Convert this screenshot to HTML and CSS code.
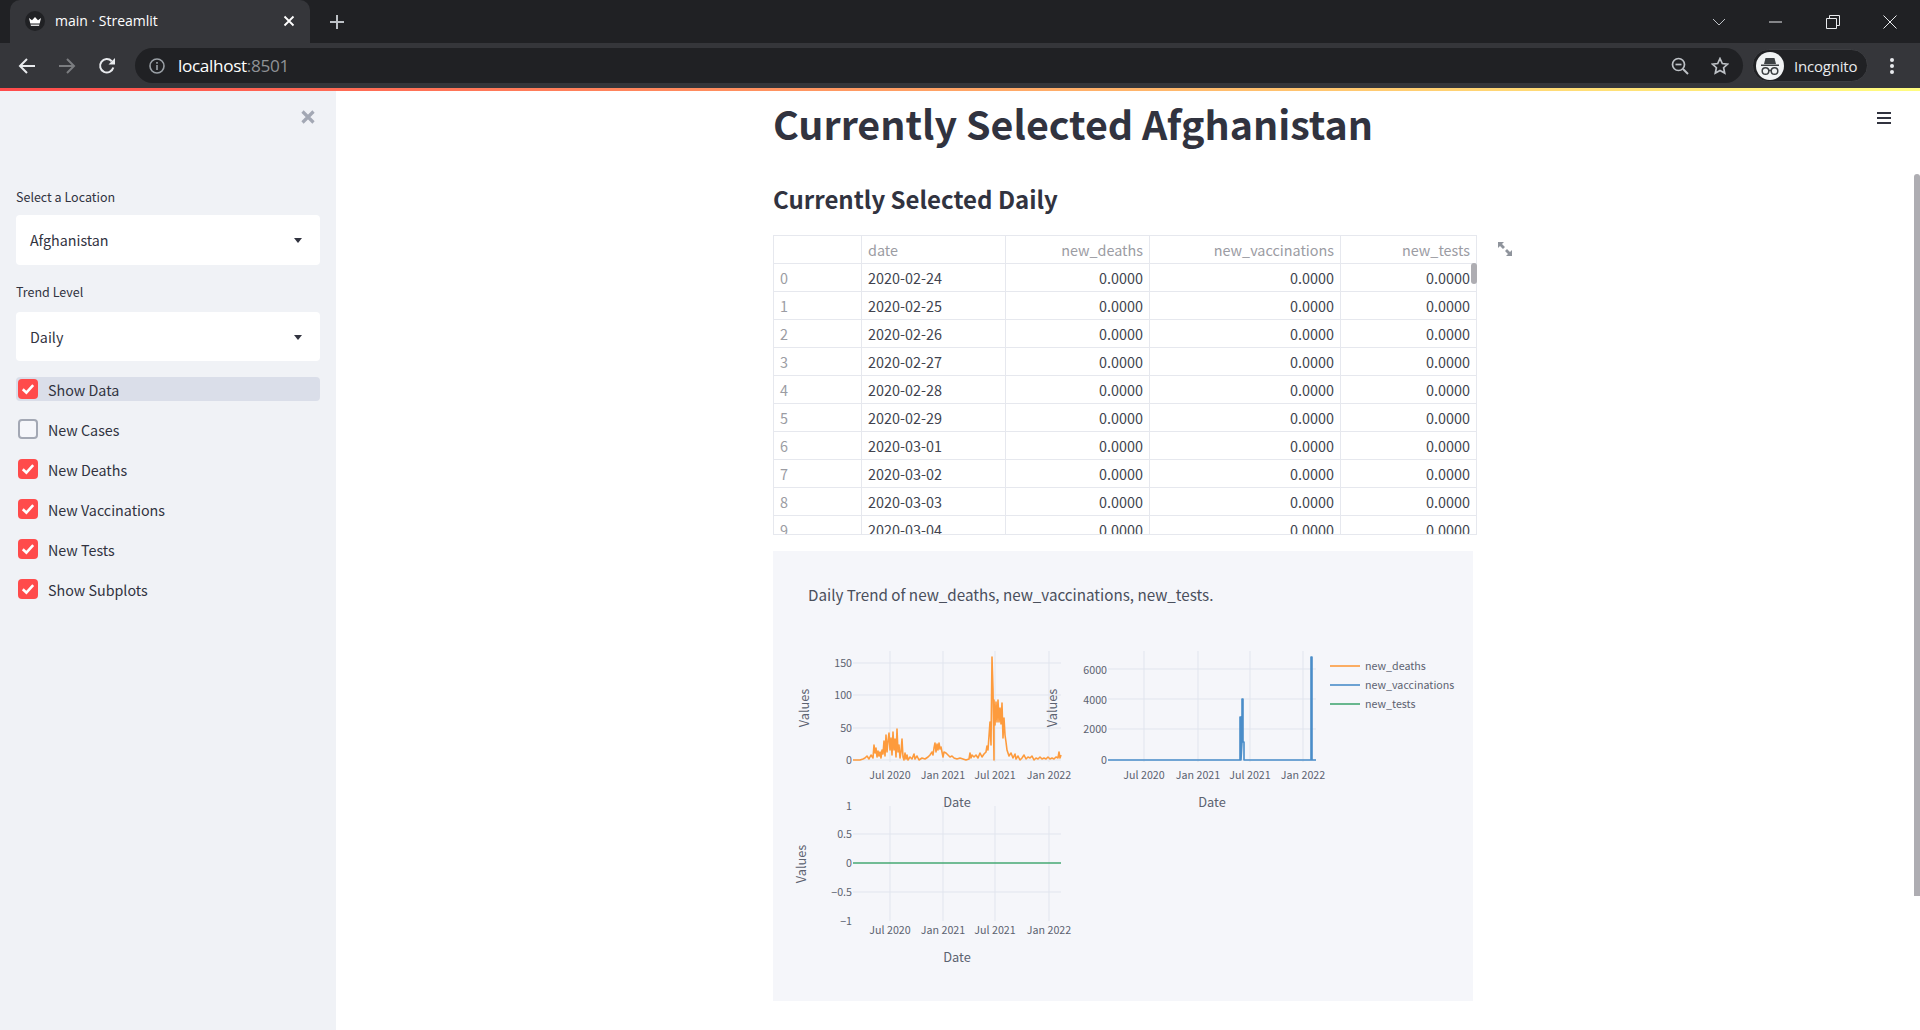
FILE: index.html
```html
<!DOCTYPE html>
<html>
<head>
    <meta charset="utf-8" />
    <title>main · Streamlit</title>
    <link rel="stylesheet" href="styles.css">
</head>
<body>

<header class="browser">
    <div class="tabstrip">
        <div class="tab">
            <svg class="favicon" width="20" height="20" viewBox="0 0 20 20">
                <circle cx="10" cy="10" r="10" fill="#202124"/>
                <path d="M4 7l3 2.2L10 6l3 3.2L16 7l-1.3 5.5H5.300z" fill="#fff"/>
                <path d="M5.500 13.500h9l-.5 1.500H6z" fill="#ddd"/>
            </svg>
            <span class="tab-title">main · Streamlit</span>
            <svg class="tab-close" width="12" height="12" viewBox="0 0 12 12"><path d="M1.500 1.500l9 9M10.500 1.500l-9 9" stroke="#fff" stroke-width="1.800"/></svg>
        </div>
        <svg class="new-tab" width="16" height="16" viewBox="0 0 16 16"><path d="M8 1v14M1 8h14" stroke="#bdc1c6" stroke-width="2"/></svg>
        <div class="window-controls">
            <svg width="14" height="8" viewBox="0 0 14 8"><path d="M1 1l6 6 6-6" fill="none" stroke="#bdc1c6"/></svg>
            <svg width="14" height="2" viewBox="0 0 14 2"><path d="M0 1h13" stroke="#e8eaed"/></svg>
            <svg width="14" height="14" viewBox="0 0 14 14"><path d="M.5 3.500h10v10H.5zM3.500 3.500v-3h10v10h-3" fill="none" stroke="#e8eaed"/></svg>
            <svg width="14" height="14" viewBox="0 0 14 14"><path d="M.5.500l13 13M13.500.500l-13 13" stroke="#e8eaed"/></svg>
        </div>
    </div>
    <div class="toolbar">
        <svg class="nav-icon" width="18" height="18" viewBox="0 0 18 18"><path d="M17 9H2M9 2L2 9l7 7" fill="none" stroke="#e8eaed" stroke-width="2"/></svg>
        <svg class="nav-icon" width="18" height="18" viewBox="0 0 18 18"><path d="M1 9h15M9 2l7 7-7 7" fill="none" stroke="#7b7d80" stroke-width="2"/></svg>
        <svg class="nav-icon" width="18" height="18" viewBox="0 0 18 18"><path d="M15.300 10.500A6.700 6.700 0 1 1 13.700 4.200" fill="none" stroke="#e8eaed" stroke-width="2"/><path d="M17 1v6.500h-6.500z" fill="#e8eaed"/></svg>
        <div class="omnibox">
            <svg width="16" height="16" viewBox="0 0 16 16"><circle cx="8" cy="8" r="7" fill="none" stroke="#9aa0a6" stroke-width="1.600"/><path d="M8 7v5M8 4v1.800" stroke="#9aa0a6" stroke-width="1.600"/></svg>
            <span class="url">localhost<span class="port">:8501</span></span>
            <svg class="omni-zoom" width="18" height="18" viewBox="0 0 18 18"><circle cx="7.500" cy="7.500" r="6" fill="none" stroke="#bdc1c6" stroke-width="1.700"/><path d="M12 12l5 5" stroke="#bdc1c6" stroke-width="2"/><path d="M4.500 7.500h6" stroke="#bdc1c6" stroke-width="1.700"/></svg>
            <svg width="18" height="18" viewBox="0 0 18 18"><path d="M9 1.500l2.300 5 5.300.6-4 3.600 1.100 5.400L9 13.400l-4.700 2.700 1.100-5.400-4-3.600 5.300-.6z" fill="none" stroke="#bdc1c6" stroke-width="1.700"/></svg>
        </div>
        <div class="profile">
            <svg width="28" height="28" viewBox="0 0 28 28">
                <circle cx="14" cy="14" r="14" fill="#f1f3f4"/>
                <path d="M9.500 6h9l1.500 6H8zM5 12.500h18V14H5z" fill="#3c4043"/>
                <circle cx="9.500" cy="19" r="3.300" fill="none" stroke="#3c4043" stroke-width="1.500"/>
                <circle cx="18.500" cy="19" r="3.300" fill="none" stroke="#3c4043" stroke-width="1.500"/>
                <path d="M12.800 18.500h2.400" stroke="#3c4043" stroke-width="1.500"/>
            </svg>
            <span>Incognito</span>
        </div>
        <svg class="menu-dots" width="6" height="18" viewBox="0 0 6 18"><circle cx="3" cy="3" r="2" fill="#e8eaed"/><circle cx="3" cy="9" r="2" fill="#e8eaed"/><circle cx="3" cy="15" r="2" fill="#e8eaed"/></svg>
    </div>
</header>
<div class="decoration"></div>

<div class="app">
    <aside class="sidebar">
        <svg class="sidebar-close" width="14" height="14" viewBox="0 0 14 14"><path d="M1.500 1.500l11 11M12.500 1.500l-11 11" stroke="#a3a8b4" stroke-width="3.200"/></svg>

        <label class="field-label">Select a Location</label>
        <div class="select select-location">Afghanistan<span class="caret"></span></div>

        <label class="field-label">Trend Level</label>
        <div class="select select-trend">Daily<span class="caret"></span></div>

        <div class="checks">
            <div class="check check-hover"><span class="box on"><svg width="14" height="12" viewBox="0 0 14 12"><path d="M1.800 6.200l3.600 3.400 6.800-7.400" fill="none" stroke="#fff" stroke-width="2.600"/></svg></span>Show Data</div>
            <div class="check"><span class="box"></span>New Cases</div>
            <div class="check"><span class="box on"><svg width="14" height="12" viewBox="0 0 14 12"><path d="M1.800 6.200l3.600 3.400 6.800-7.400" fill="none" stroke="#fff" stroke-width="2.600"/></svg></span>New Deaths</div>
            <div class="check"><span class="box on"><svg width="14" height="12" viewBox="0 0 14 12"><path d="M1.800 6.200l3.600 3.400 6.800-7.400" fill="none" stroke="#fff" stroke-width="2.600"/></svg></span>New Vaccinations</div>
            <div class="check"><span class="box on"><svg width="14" height="12" viewBox="0 0 14 12"><path d="M1.800 6.200l3.600 3.400 6.800-7.400" fill="none" stroke="#fff" stroke-width="2.600"/></svg></span>New Tests</div>
            <div class="check"><span class="box on"><svg width="14" height="12" viewBox="0 0 14 12"><path d="M1.800 6.200l3.600 3.400 6.800-7.400" fill="none" stroke="#fff" stroke-width="2.600"/></svg></span>Show Subplots</div>
        </div>
    </aside>

    <main class="main">
        <svg class="hamburger" width="14" height="12" viewBox="0 0 14 12"><path d="M0 1h14M0 6h14M0 11h14" stroke="#31333f" stroke-width="2"/></svg>
        <div class="scroll-thumb"></div>

        <div class="content">
            <h1>Currently Selected Afghanistan</h1>
            <h2>Currently Selected Daily</h2>

            <div class="table-row">
                <div class="table-wrap">
                    <table>
                        <thead>
                            <tr><th class="col-idx"></th><th class="col-date">date</th><th>new_deaths</th><th class="col-vacc">new_vaccinations</th><th>new_tests</th></tr>
                        </thead>
                        <tbody>
                            <tr><td class="idx">0</td><td class="date">2020-02-24</td><td>0.0000</td><td>0.0000</td><td>0.0000</td></tr>
                            <tr><td class="idx">1</td><td class="date">2020-02-25</td><td>0.0000</td><td>0.0000</td><td>0.0000</td></tr>
                            <tr><td class="idx">2</td><td class="date">2020-02-26</td><td>0.0000</td><td>0.0000</td><td>0.0000</td></tr>
                            <tr><td class="idx">3</td><td class="date">2020-02-27</td><td>0.0000</td><td>0.0000</td><td>0.0000</td></tr>
                            <tr><td class="idx">4</td><td class="date">2020-02-28</td><td>0.0000</td><td>0.0000</td><td>0.0000</td></tr>
                            <tr><td class="idx">5</td><td class="date">2020-02-29</td><td>0.0000</td><td>0.0000</td><td>0.0000</td></tr>
                            <tr><td class="idx">6</td><td class="date">2020-03-01</td><td>0.0000</td><td>0.0000</td><td>0.0000</td></tr>
                            <tr><td class="idx">7</td><td class="date">2020-03-02</td><td>0.0000</td><td>0.0000</td><td>0.0000</td></tr>
                            <tr><td class="idx">8</td><td class="date">2020-03-03</td><td>0.0000</td><td>0.0000</td><td>0.0000</td></tr>
                            <tr><td class="idx">9</td><td class="date">2020-03-04</td><td>0.0000</td><td>0.0000</td><td>0.0000</td></tr>
                        </tbody>
                    </table>
                    <div class="table-thumb"></div>
                </div>
                <svg class="expand" width="16" height="16" viewBox="0 0 16 16">
                    <path d="M1 1h6L5 3l3 3-2 2-3-3-2 2z" fill="#8f949c"/>
                    <path d="M15 15H9l2-2-3-3 2-2 3 3 2-2z" fill="#8f949c"/>
                </svg>
            </div>

            <!-- page coordinates, so the ticks can be read straight off the screenshot -->
            <svg class="chart" width="700" height="450" viewBox="773 551 700 450">
                <text class="chart-title" x="808" y="601">Daily Trend of new_deaths, new_vaccinations, new_tests.</text>

                <g class="grid">
                    <path d="M890 651V762M943 651V762M995 651V762M1049 651V762M853 663H1061M853 695H1061M853 728H1061M853 760H1061"/>
                    <path d="M1144 651V762M1198 651V762M1250 651V762M1303 651V762M1108 669H1316M1108 699H1316M1108 729H1316M1108 760H1316"/>
                    <path d="M890 806V921M943 806V921M995 806V921M1049 806V921M853 834H1061M853 892H1061"/>
                </g>

                <polyline class="trace-orange" points="853,760 860,760 863,759 865,758 867,756 869,759 871,755 873,758 874,745 875,753 876,748 877,757 878,751 879,756 880,752 881,758 882,750 883,754 884,741 885,756 886,735 887,752 888,741 889,733 890,750 891,738 892,755 893,732 894,750 895,739 896,757 897,729 898,752 899,745 900,758 901,752 902,739 903,757 904,760 905,753 906,759 907,755 908,760 910,757 912,759 914,754 915,759 917,756 919,760 922,758 925,759 928,757 930,755 932,752 933,755 934,748 935,743 936,752 937,744 938,750 939,743 940,749 941,747 942,752 943,757 944,752 946,753 948,755 950,757 952,756 954,758 957,759 960,758 963,759 966,760 969,759 970,753 971,758 972,755 974,757 976,755 978,758 980,753 982,757 984,754 986,752 987,746 988,750 989,736 990,722 991,745 992,657 993,690 994,760 994,700 995,725 996,702 997,722 998,700 999,722 1000,708 1001,724 1002,703 1003,738 1004,718 1005,735 1006,742 1007,750 1009,756 1011,753 1013,758 1015,754 1016,759 1018,756 1020,760 1022,758 1024,755 1026,759 1028,757 1030,758 1032,756 1034,760 1036,758 1038,759 1040,757 1042,759 1044,758 1046,759 1048,757 1050,759 1052,758 1054,759 1056,757 1058,758 1059,752 1060,758 1061,755"/>
                <polyline class="trace-blue" points="1108,760 1240,760 1240,717 1241,717 1241,760 1242,742 1242,699 1243,699 1243,742 1244,742 1244,760 1311,760 1311,657 1312,657 1312,760 1316,760"/>
                <path class="trace-green" d="M853 863H1061"/>

                <g class="tick tick-x">
                    <text x="890" y="779">Jul 2020</text><text x="943" y="779">Jan 2021</text><text x="995" y="779">Jul 2021</text><text x="1049" y="779">Jan 2022</text>
                    <text x="1144" y="779">Jul 2020</text><text x="1198" y="779">Jan 2021</text><text x="1250" y="779">Jul 2021</text><text x="1303" y="779">Jan 2022</text>
                    <text x="890" y="934">Jul 2020</text><text x="943" y="934">Jan 2021</text><text x="995" y="934">Jul 2021</text><text x="1049" y="934">Jan 2022</text>
                </g>
                <g class="tick tick-y">
                    <text x="852" y="667">150</text><text x="852" y="699">100</text><text x="852" y="732">50</text><text x="852" y="764">0</text>
                    <text x="1107" y="674">6000</text><text x="1107" y="704">4000</text><text x="1107" y="733">2000</text><text x="1107" y="764">0</text>
                    <text x="852" y="810">1</text><text x="852" y="838">0.5</text><text x="852" y="867">0</text><text x="852" y="896">−0.5</text><text x="852" y="925">−1</text>
                </g>
                <g class="axis-title">
                    <text x="957" y="807">Date</text>
                    <text x="1212" y="807">Date</text>
                    <text x="957" y="962">Date</text>
                    <text transform="translate(809 708) rotate(-90)">Values</text>
                    <text transform="translate(1057 708) rotate(-90)">Values</text>
                    <text transform="translate(806 864) rotate(-90)">Values</text>
                </g>

                <g class="legend">
                    <path class="trace-orange" d="M1330 666H1360"/>
                    <path class="trace-blue" d="M1330 685H1360"/>
                    <path class="trace-green" d="M1330 704H1360"/>
                    <text x="1365" y="670">new_deaths</text>
                    <text x="1365" y="689">new_vaccinations</text>
                    <text x="1365" y="708">new_tests</text>
                </g>
            </svg>
        </div>
    </main>
</div>

</body>
</html>
```

FILE: styles.css
```css
* {
    box-sizing: border-box;
}
html, body {
    height: 100%;
}
body {
    margin: 0;
    overflow: hidden;
    background: #fff;
    color: #31333f;
    font-family: "Noto Sans CJK JP", "Noto Sans", sans-serif;
}

/* browser chrome */
.browser {
    height: 88px;
    background: #35363a;
    font-family: "Open Sans", "Noto Sans", sans-serif;
    color: #e8eaed;
}
.tabstrip {
    height: 43px;
    display: flex;
    align-items: center;
    background: #202124;
    padding-left: 10px;
}
.tab {
    width: 300px;
    height: 43px;
    display: flex;
    align-items: center;
    background: #35363a;
    border-radius: 10px 10px 0 0;
    padding: 0 15px 2px;
}
.favicon {
    margin-right: 10px;
}
.tab-title {
    flex: 1;
    font-size: 14px;
    color: #fff;
}
.new-tab {
    margin-left: 19px;
}
.window-controls {
    margin-left: auto;
    display: flex;
    align-items: center;
    gap: 43px;
    padding-right: 23px;
    height: 37px;
}
.toolbar {
    height: 45px;
    display: flex;
    align-items: center;
    padding: 0 13px 0 18px;
}
.nav-icon {
    margin-right: 22px;
}
.omnibox {
    width: 1608px;
    height: 35px;
    margin-left: -3px;
    display: flex;
    align-items: center;
    gap: 22px;
    background: #202124;
    border-radius: 18px;
    padding: 0 14px 0 14px;
}
.url {
    flex: 1;
    margin-left: -9px;
    font-size: 17.2px;
    letter-spacing: -.35px;
    color: #fff;
}
.port {
    color: #8f9296;
}
.profile {
    width: 116px;
    height: 33px;
    margin-left: 9px;
    display: flex;
    align-items: center;
    gap: 10px;
    background: #202124;
    border: 1px solid #3c3d41;
    border-radius: 17px;
    padding-left: 3px;
    font-size: 15px;
    letter-spacing: -.2px;
}
.menu-dots {
    margin-left: 21px;
}
.decoration {
    height: 3px;
    background: linear-gradient(90deg, #ff4b4b, #fffd80);
}

.app {
    display: flex;
    height: 939px;
}

/* sidebar */
.sidebar {
    position: relative;
    width: 336px;
    flex: none;
    background: #f0f2f6;
    padding: 98px 16px 0;
}
.sidebar-close {
    position: absolute;
    top: 19px;
    left: 301px;
}
.field-label {
    display: block;
    height: 20px;
    line-height: 16px;
    font-size: 12.5px;
    margin-bottom: 6px;
}
.select {
    position: relative;
    display: flex;
    align-items: center;
    height: 49px;
    margin-bottom: 21px;
    padding-left: 14px;
    background: #fff;
    border-radius: 4px;
    font-size: 14.3px;
}
.select-location {
    height: 50px;
    margin: 1px 0 19px;
    padding-bottom: 2px;
}
.select-trend {
    margin-top: 8px;
}
.caret {
    position: absolute;
    right: 18px;
    top: 50%;
    margin-top: -2px;
    border: 4px solid transparent;
    border-top: 5px solid #31333f;
    border-bottom: 0;
}
.checks {
    margin-top: -5px;
    display: flex;
    flex-direction: column;
    gap: 16px;
}
.check {
    height: 24px;
    display: flex;
    align-items: center;
    font-size: 14.3px;
    padding-left: 2px;
    border-radius: 4px;
}
.check-hover {
    background: #dadee9;
}
.box {
    width: 20px;
    height: 20px;
    margin-right: 10px;
    display: flex;
    align-items: center;
    justify-content: center;
    background: #f5f6fa;
    border: 2px solid #a3a8b4;
    border-radius: 4px;
}
.box.on {
    background: #ff4b4b;
    border: 0;
}

/* main area */
.main {
    position: relative;
    flex: 1;
    overflow: hidden;
}
.hamburger {
    position: absolute;
    top: 21px;
    right: 29px;
}
.scroll-thumb {
    position: absolute;
    top: 83px;
    right: 0;
    width: 6px;
    height: 722px;
    background: #aeadb2;
    border-radius: 3px 3px 0 0;
}
.content {
    width: 710px;
    margin: 0 auto;
}
h1 {
    margin: 0;
    padding-top: 2px;
    height: 67px;
    font-size: 39.4px;
    line-height: 60px;
    font-weight: 700;
    white-space: nowrap;
}
h2 {
    margin: 0;
    height: 77px;
    padding-top: 21px;
    font-size: 24px;
    line-height: 40px;
    font-weight: 600;
    white-space: nowrap;
}

/* table */
.table-row {
    display: flex;
    align-items: flex-start;
}
.table-wrap {
    position: relative;
    flex: none;
    width: 704px;
    height: 300px;
    overflow: hidden;
    border-bottom: 1px solid #e6e8ee;
}
table {
    width: 704px;
    table-layout: fixed;
    border-collapse: collapse;
    font-size: 14.4px;
    color: #41434e;
}
th, td {
    height: 28px;
    padding: 0 6px;
    border: 1px solid #e6e8ee;
    text-align: right;
    font-weight: 400;
    line-height: 26px;
    white-space: nowrap;
}
th {
    color: #9b9ca3;
}
.col-idx {
    width: 88px;
}
.col-date {
    width: 144px;
    text-align: left;
}
.col-vacc {
    width: 191px;
}
th:nth-child(3) {
    width: 144px;
}
.idx {
    text-align: left;
    color: #9b9ca3;
}
.date {
    text-align: left;
}
.table-thumb {
    position: absolute;
    top: 28px;
    right: 0;
    width: 6px;
    height: 21px;
    background: #aeadb2;
    border-radius: 3px;
}
.expand {
    margin: 6px 0 0 20px;
    flex: none;
}

/* chart */
.chart {
    display: block;
    margin-top: 16px;
    background: #f5f6fa;
}
.chart text {
    font-family: "Noto Sans CJK JP", "Noto Sans", sans-serif;
}
.chart-title {
    font-size: 15.2px;
    fill: #4a4f5c;
}
.grid path {
    fill: none;
    stroke: #e1e5ee;
    stroke-width: 1;
}
.trace-orange, .trace-blue, .trace-green {
    fill: none;
    stroke-width: 1.6;
    stroke-linejoin: round;
}
.trace-orange {
    stroke: #fd9b3d;
}
.trace-blue {
    stroke: #4a8dc9;
}
.trace-green {
    stroke: #45a873;
}
.tick {
    font-size: 10.7px;
    fill: #5c6270;
}
.tick-x {
    text-anchor: middle;
}
.tick-y {
    text-anchor: end;
}
.axis-title {
    font-size: 12.8px;
    fill: #5c6270;
    text-anchor: middle;
}
.legend {
    font-size: 10.7px;
    fill: #5c6270;
}
```
